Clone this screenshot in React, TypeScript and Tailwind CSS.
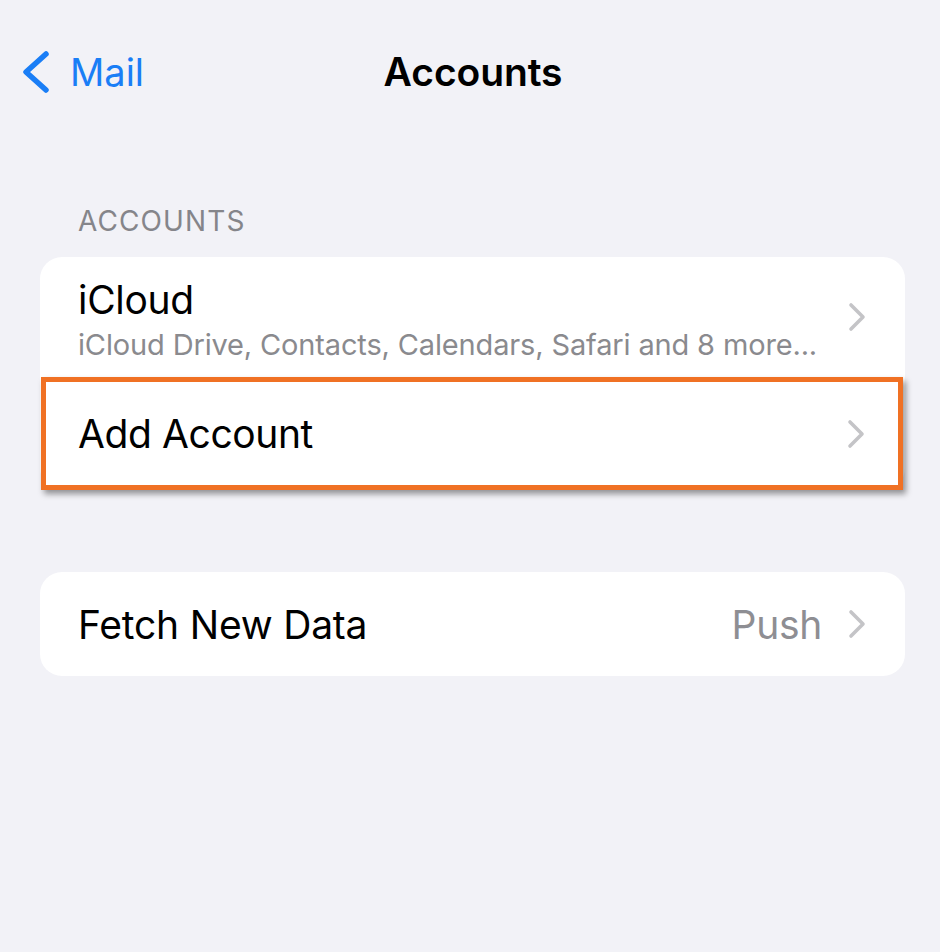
import React from "react";

const Chevron = () => (
  <svg width="18" height="30" viewBox="0 0 18 30" fill="none" className="shrink-0">
    <path d="M3 3 L15 15 L3 27" stroke="#c4c4c7" strokeWidth="3.6" strokeLinecap="round" strokeLinejoin="round" />
  </svg>
);

export default function App() {
  return (
    <div
      className="w-[940px] h-[952px] bg-[#f2f2f7] overflow-hidden"
      style={{ fontFamily: "Inter, 'Liberation Sans', sans-serif" }}
    >
      {/* Nav bar */}
      <div className="relative mt-[40px] h-[64px] flex items-center">
        <div className="flex items-center pl-[20px]">
          <svg width="32" height="44" viewBox="0 0 32 44" fill="none">
            <path d="M26 4 L6 22 L26 40" stroke="#1a7ef6" strokeWidth="5.5" strokeLinecap="round" strokeLinejoin="round" />
          </svg>
          <span className="ml-[18px] text-[38px] leading-none text-[#1a7ef6] tracking-[0px]">Mail</span>
        </div>
        <div className="absolute left-0 right-0 top-0 h-full flex items-center justify-center pointer-events-none">
          <span className="text-[39px] leading-none font-semibold text-black tracking-[-0.1px] ml-[6px] mt-[-2px]">Accounts</span>
        </div>
      </div>

      {/* Section header */}
      <div className="mt-[101px] pl-[78px] h-[32px] flex items-center text-[28px] text-[#85858a] tracking-[1.1px]">
        ACCOUNTS
      </div>

      {/* Accounts card */}
      <div className="mt-[20px] mx-[40px] w-[865px] bg-white rounded-[22px]">
        <div className="h-[120px] flex items-center pl-[38px] pr-[39px]">
          <div className="flex-1 flex flex-col">
            <span className="text-[39px] leading-[46px] text-black tracking-[-0.3px] mt-[6px]">iCloud</span>
            <span className="text-[29px] leading-[38px] text-[#8a8a8e] tracking-[-0.15px] mt-[3px]">
              iCloud Drive, Contacts, Calendars, Safari and 8 more...
            </span>
          </div>
          <Chevron />
        </div>
        <div className="ml-[1px] w-[862px] h-[113px] flex items-center pl-[32px] pr-[33px] border-[5px] border-[#f07124] bg-white shadow-[3px_4px_6px_rgba(0,0,0,0.4)]">
          <span className="flex-1 text-[39px] leading-none text-black tracking-[-0.4px]">Add Account</span>
          <Chevron />
        </div>
      </div>

      {/* Fetch card */}
      <div className="mt-[82px] mx-[40px] w-[865px] h-[104px] bg-white rounded-[22px] flex items-center pl-[38px] pr-[39px]">
        <span className="flex-1 text-[39px] leading-none text-black tracking-[-0.2px]">Fetch New Data</span>
        <span className="text-[39px] leading-none text-[#8e8e93] tracking-[-0.3px] mr-[26px]">Push</span>
        <Chevron />
      </div>
    </div>
  );
}
